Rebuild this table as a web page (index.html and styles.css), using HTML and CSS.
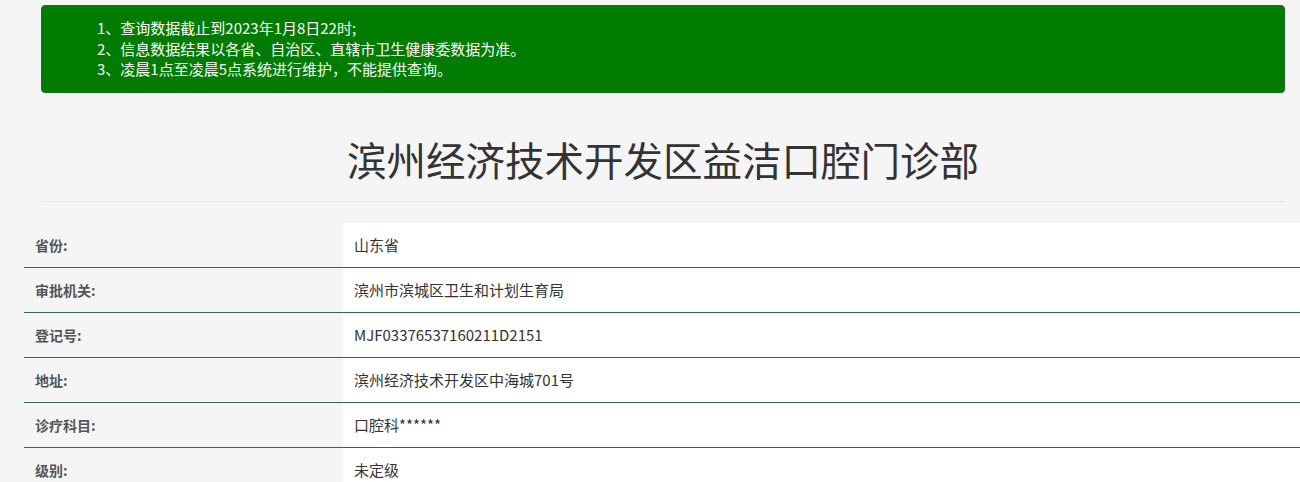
FILE: index.html
```html
<!DOCTYPE html>
<html lang="zh-CN">
<head>
<meta charset="utf-8">
<title>滨州经济技术开发区益洁口腔门诊部</title>
<link rel="stylesheet" href="styles.css">
</head>
<body>
<div class="container">
  <div class="notice">
    <ul class="notice-list">
      <li>1、查询数据截止到2023年1月8日22时;</li>
      <li>2、信息数据结果以各省、自治区、直辖市卫生健康委数据为准。</li>
      <li>3、凌晨1点至凌晨5点系统进行维护，不能提供查询。</li>
    </ul>
  </div>
  <h1 class="page-title">滨州经济技术开发区益洁口腔门诊部</h1>
</div>
<table class="info">
  <tbody>
    <tr><th>省份:</th><td>山东省</td></tr>
    <tr><th>审批机关:</th><td>滨州市滨城区卫生和计划生育局</td></tr>
    <tr><th>登记号:</th><td>MJF03376537160211D2151</td></tr>
    <tr><th>地址:</th><td>滨州经济技术开发区中海城701号</td></tr>
    <tr><th>诊疗科目:</th><td>口腔科******</td></tr>
    <tr><th>级别:</th><td>未定级</td></tr>
  </tbody>
</table>
</body>
</html>
```

FILE: styles.css
```css
html, body {
  margin: 0;
  padding: 0;
  background: #f5f5f5;
  font-family: "Noto Sans CJK SC", "Noto Sans", sans-serif;
  color: #333;
  overflow: hidden;
}

.container {
  padding: 5px 15px 0 41px;
}

.notice {
  background: #007c00;
  border: 1px solid #1c6f1c;
  border-radius: 4px;
  padding: 12px 15px;
  color: #fff;
}

.notice-list {
  list-style: none;
  margin: 0;
  padding: 0 0 0 40px;
  font-size: 15px;
  line-height: 20.5px;
}

.page-title {
  margin: 43px 0 21px;
  padding: 0 0 19px;
  border-bottom: 1px solid #e6e6e6;
  text-align: center;
  font-size: 39.5px;
  line-height: 46px;
  font-weight: normal;
  color: #333;
}

.info {
  margin-left: 24px;
  width: calc(100% - 24px);
  border-collapse: collapse;
}

.info th,
.info td {
  height: 44px;
  padding: 0 11px;
  border-bottom: 1px solid #2d6c49;
  text-align: left;
  vertical-align: middle;
}

.info th {
  width: 297px;
  background: #f5f5f5;
  color: #555;
  font-weight: bold;
  font-size: 14px;
}

.info td {
  background: #fff;
  color: #333;
  font-weight: normal;
  font-size: 15px;
}
```
